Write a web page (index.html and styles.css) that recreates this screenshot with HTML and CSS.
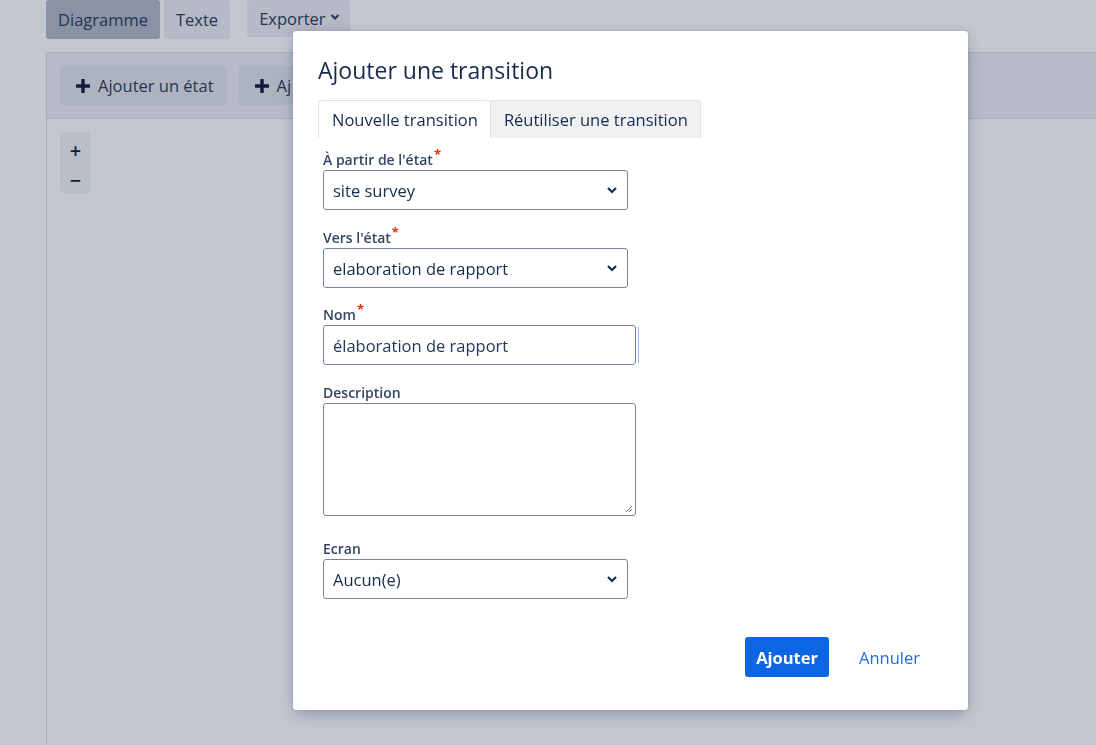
FILE: index.html
```html
<!DOCTYPE html>
<html lang="fr">
<head>
<meta charset="utf-8">
<title>Ajouter une transition</title>
<link rel="stylesheet" href="styles.css">
</head>
<body>
<div class="page">
  <div class="topbar">
    <button class="bg-btn bg-btn-active">Diagramme</button>
    <button class="bg-btn">Texte</button>
    <button class="bg-btn bg-btn-export">Exporter
      <svg class="caret" width="10" height="8" viewBox="0 0 10 8"><path d="M1.5 2 L5 5.5 L8.5 2" fill="none" stroke="currentColor" stroke-width="2"/></svg>
    </button>
  </div>
  <div class="panel">
    <div class="toolbar">
      <button class="tool-btn"><svg class="plus" width="14" height="14" viewBox="0 0 14 14"><path d="M7 1 V13 M1 7 H13" stroke="currentColor" stroke-width="3.4" stroke-linecap="round"/></svg>Ajouter un état</button>
      <button class="tool-btn"><svg class="plus" width="14" height="14" viewBox="0 0 14 14"><path d="M7 1 V13 M1 7 H13" stroke="currentColor" stroke-width="3.4" stroke-linecap="round"/></svg>Aj</button>
    </div>
    <div class="canvas">
      <div class="zoom">
        <span class="zoom-item">+</span>
        <span class="zoom-item">−</span>
      </div>
    </div>
  </div>
</div>

<div class="modal">
  <h2 class="modal-title">Ajouter une transition</h2>
  <div class="tabs">
    <div class="tab tab-active">Nouvelle transition</div>
    <div class="tab">Réutiliser une transition</div>
  </div>
  <form class="form">
    <div class="field field-first">
      <label class="label">À partir de l'état<span class="req">*</span></label>
      <div class="select">site survey
        <svg class="chev" width="12" height="8" viewBox="0 0 12 8"><path d="M2 2 L6 6 L10 2" fill="none" stroke="#172b4d" stroke-width="2.2"/></svg>
      </div>
    </div>
    <div class="field">
      <label class="label">Vers l'état<span class="req">*</span></label>
      <div class="select">elaboration de rapport
        <svg class="chev" width="12" height="8" viewBox="0 0 12 8"><path d="M2 2 L6 6 L10 2" fill="none" stroke="#172b4d" stroke-width="2.2"/></svg>
      </div>
    </div>
    <div class="field field-nom">
      <label class="label">Nom<span class="req">*</span></label>
      <div class="input-row">
        <div class="input">élaboration de rapport</div>
        <span class="focus-line"></span>
      </div>
    </div>
    <div class="field">
      <label class="label">Description</label>
      <div class="textarea">
        <svg class="grip" width="8" height="8" viewBox="0 0 8 8"><path d="M7 1 L1 7 M7 4 L4 7" stroke="#6b778c" stroke-width="1"/></svg>
      </div>
    </div>
    <div class="field field-ecran">
      <label class="label">Ecran</label>
      <div class="select">Aucun(e)
        <svg class="chev" width="12" height="8" viewBox="0 0 12 8"><path d="M2 2 L6 6 L10 2" fill="none" stroke="#172b4d" stroke-width="2.2"/></svg>
      </div>
    </div>
  </form>
  <div class="footer">
    <button class="btn-primary">Ajouter</button>
    <button class="btn-link">Annuler</button>
  </div>
</div>
</body>
</html>
```
FILE: styles.css
```css
* { box-sizing: border-box; }
html, body { margin: 0; padding: 0; }
body {
  background: #c3c7d0;
  font-family: "Open Sans", "Noto Sans", sans-serif;
  color: #172b4d;
  height: 745px;
  overflow: hidden;
}
button { font-family: inherit; border: 0; cursor: pointer; }

.page { display: flex; flex-direction: column; height: 745px; padding-left: 46px; }

.topbar { display: flex; align-items: flex-start; height: 52px; }
.bg-btn {
  background: #b5bac6;
  color: #253452;
  font-size: 16.5px;
  height: 39px;
  padding: 0 12px;
  border-radius: 3px;
  margin-right: 4px;
}
.bg-btn-active { background: #8a92a5; }
.bg-btn-export { margin-left: 13px; height: 37px; display: flex; align-items: center; gap: 4px; padding: 0 10px 0 12px; }
.caret { color: #253452; margin-top: -4px; }

.panel {
  flex: 1;
  border-left: 1px solid #a7adbb;
  border-top: 1px solid #a7adbb;
  display: flex;
  flex-direction: column;
}
.toolbar {
  height: 66px;
  background: #b6bbc7;
  border-bottom: 1px solid #a7adbb;
  display: flex;
  align-items: center;
  padding-left: 13px;
  gap: 12px;
}
.tool-btn {
  background: #adb3c0;
  color: #253452;
  font-size: 16.5px;
  height: 39px;
  padding: 0 13px 0 16px;
  border-radius: 3px;
  display: flex;
  align-items: center;
  white-space: nowrap;
}
.plus { margin-right: 8px; color: #0f1d3a; }
.canvas { flex: 1; padding: 13px 0 0 13px; }
.zoom {
  width: 31px;
  height: 61px;
  background: #b9bec9;
  border-radius: 3px;
  display: flex;
  flex-direction: column;
  align-items: center;
  padding-top: 7px;
  gap: 6px;
  color: #0f1d3a;
  font-weight: 600;
  font-size: 20px;
}
.zoom-item { height: 24px; line-height: 24px; }

.modal {
  position: fixed;
  left: 293px;
  top: 31px;
  width: 675px;
  height: 679px;
  background: #fff;
  border-radius: 3px;
  box-shadow: 0 0 1px rgba(9,30,66,.3), 0 8px 16px -4px rgba(9,30,66,.25), 0 0 12px rgba(9,30,66,.12);
  padding: 26px 25px 33px 25px;
  display: flex;
  flex-direction: column;
}
.modal-title {
  margin: 0;
  font-size: 23px;
  font-weight: 400;
  line-height: 26px;
  color: #172b4d;
}
.tabs { display: flex; margin-top: 17px; height: 38px; }
.tab {
  font-size: 16.5px;
  line-height: 38px;
  padding: 0 12px 0 13px;
  background: #f0f1f3;
  border: 1px solid #dfe1e6;
  border-bottom: 0;
  border-radius: 3px 3px 0 0;
  color: #172b4d;
}
.tab-active { background: #fff; border-right: 0; }

.form { padding-left: 5px; display: flex; flex-direction: column; }
.field { display: flex; flex-direction: column; margin-top: 18px; }
.field-first { margin-top: 12px; }
.field-nom { margin-top: 17px; }
.field-ecran { margin-top: 23px; }
.label {
  font-size: 14px;
  font-weight: 600;
  line-height: 20px;
  height: 20px;
  color: #344563;
}
.req { color: #de350b; font-size: 13px; font-weight: 700; vertical-align: 6px; margin-left: 1px; line-height: 0; }
.select, .input, .textarea {
  border: 1px solid #7a869a;
  border-radius: 3px;
  font-size: 16.5px;
  color: #172b4d;
  background: #fff;
}
.select {
  width: 305px;
  height: 40px;
  display: flex;
  align-items: center;
  justify-content: space-between;
  padding: 0 9px 0 9px;
}
.chev { flex: none; }
.input-row { display: flex; align-items: center; }
.input {
  width: 313px;
  height: 40px;
  display: flex;
  align-items: center;
  padding: 0 9px;
  color: #253858;
}
.focus-line { width: 1px; height: 36px; background: #8fb8f2; margin-left: 2px; }
.textarea {
  width: 313px;
  height: 113px;
  display: flex;
  align-items: flex-end;
  justify-content: flex-end;
  padding: 0 2px 2px 0;
}

.footer {
  margin-top: auto;
  display: flex;
  justify-content: flex-end;
  align-items: center;
  padding-right: 9px;
  gap: 16px;
}
.btn-primary {
  background: #0c66e4;
  color: #fff;
  font-weight: 700;
  font-size: 16.5px;
  height: 40px;
  padding: 0 11px;
  border-radius: 3px;
}
.btn-link {
  background: transparent;
  color: #1d6ee6;
  font-size: 16.5px;
  height: 40px;
  padding: 0 14px;
}
```
